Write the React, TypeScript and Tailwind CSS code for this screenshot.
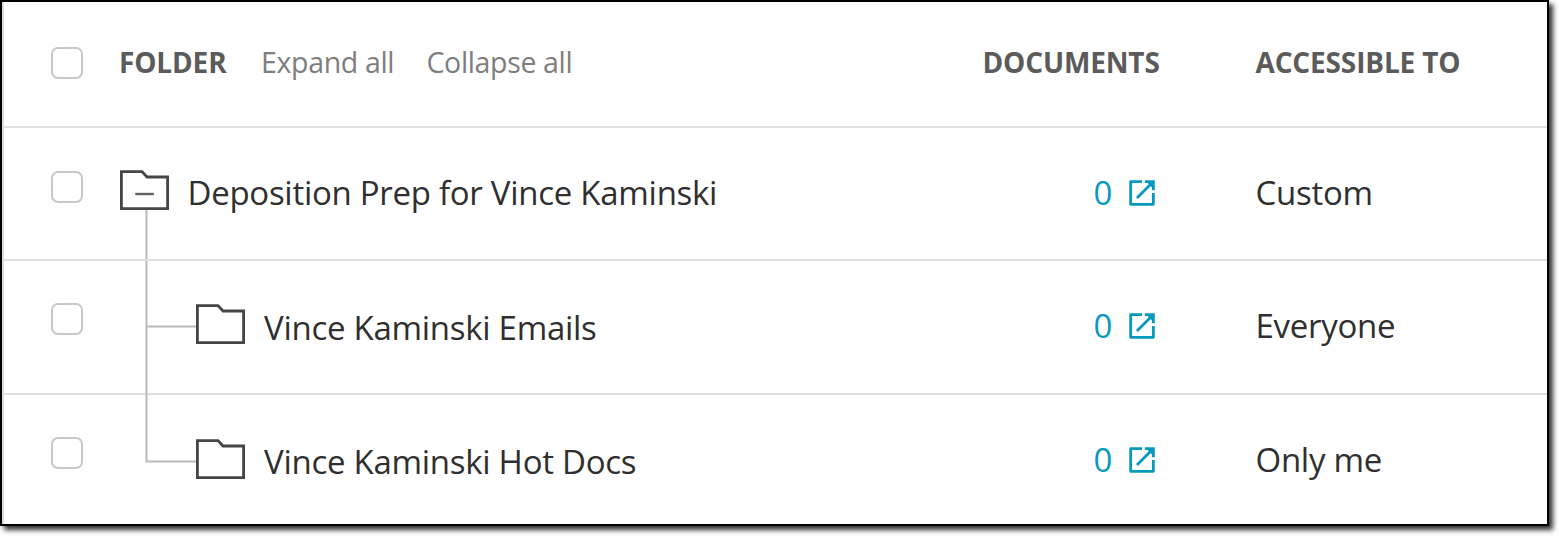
type Row = {
  name: string;
  access: string;
  child: boolean;
  rowClass: string;
  checkClass: string;
  nameClass: string;
  iconClass: string;
  cellClass: string;
};

const rows: Row[] = [
  {
    name: "Deposition Prep for Vince Kaminski",
    access: "Custom",
    child: false,
    rowClass: "h-[133px] border-b-2 border-[#dfe0e1]",
    checkClass: "pt-[42.500px]",
    nameClass: "pt-[45px]",
    iconClass: "mt-[-3px]",
    cellClass: "pt-[45px]",
  },
  {
    name: "Vince Kaminski Emails",
    access: "Everyone",
    child: true,
    rowClass: "h-[134px] border-b-2 border-[#dfdfdf]",
    checkClass: "pt-[41.500px]",
    nameClass: "pt-[47px]",
    iconClass: "mt-[-4.500px]",
    cellClass: "pt-[45px]",
  },
  {
    name: "Vince Kaminski Hot Docs",
    access: "Only me",
    child: true,
    rowClass: "h-[129px]",
    checkClass: "pt-[42px]",
    nameClass: "pt-[47px]",
    iconClass: "mt-[-3.500px]",
    cellClass: "pt-[45px]",
  },
];

function Checkbox() {
  return (
    <button
      role="checkbox"
      aria-checked="false"
      className="block h-8 w-8 rounded-[7px] border-2 border-[#c8c8c8] bg-white"
    />
  );
}

function FolderIcon({ open }: { open: boolean }) {
  return (
    <svg width="49" height="41" viewBox="0 0 49 41" fill="none">
      <path
        d="M1.4 1.6H22L27 7H47.6V38.7H1.4Z"
        fill="#fff"
        stroke="#454545"
        strokeWidth="2.8"
      />
      {open && <path d="M15.3 24H33.8" stroke="#606060" strokeWidth="2.4" />}
    </svg>
  );
}

function OpenIcon() {
  return (
    <svg width="34" height="34" viewBox="0 0 24 24" fill="#0899bf">
      <path d="M19 19H5V5h7V3H4A1 1 0 0 0 3 4V20A1 1 0 0 0 4 21H20A1 1 0 0 0 21 20V12h-2v7zM14 3v2h3.590l-9.830 9.830 1.410 1.410L19 6.410V10h2V3h-7z" />
      <path d="M14.500 3.500H20.500V9.500Z" />
    </svg>
  );
}

export default function App() {
  return (
    <div className="h-[536px] w-[1559px] overflow-hidden bg-white font-['Open_Sans','Noto_Sans',sans-serif] text-[#2f2f2f]">
      <div className="relative h-[526px] w-[1549px] border-2 border-black bg-white shadow-[4px_4px_5px_rgba(0,0,0,0.8)]">
        <div className="h-full border-l-2 border-[#dcdcdc]">
          <div className="grid h-[126px] grid-cols-[115px_863.5px_273px_1fr] border-b-2 border-[#dfe0e1] text-[28px] leading-10 tracking-[-0.15px] whitespace-nowrap">
            <div className="pt-[45px] pl-[47px]">
              <Checkbox />
            </div>
            <div className="flex pt-[39.500px] text-[#7e7e7e]">
              <span className="w-[142px] font-bold text-[#5b5b5b]">FOLDER</span>
              <span className="w-[165.500px] text-[28.500px] tracking-[-0.35px]">Expand all</span>
              <span className="text-[28.500px] tracking-[-0.35px]">Collapse all</span>
            </div>
            <div className="pt-[39.500px] font-bold text-[#5b5b5b]">DOCUMENTS</div>
            <div className="pt-[39.500px] font-bold text-[#5b5b5b]">ACCESSIBLE TO</div>
          </div>
          {rows.map((r) => (
            <div
              key={r.name}
              className={`grid grid-cols-[114px_863.5px_274px_1fr] text-[33px] leading-10 tracking-[-0.28px] whitespace-nowrap ${r.rowClass}`}
            >
              <div className={`pl-[47px] ${r.checkClass}`}>
                <Checkbox />
              </div>
              <div
                className={`flex items-start ${r.child ? "gap-[19px] pl-[78px]" : "gap-[18.500px] pl-[2px]"} ${r.nameClass}`}
              >
                <div className={r.iconClass}>
                  <FolderIcon open={!r.child} />
                </div>
                <span>{r.name}</span>
              </div>
              <div className={`flex items-start gap-[12.500px] pl-[112px] text-[#0899bf] ${r.cellClass}`}>
                <span>0</span>
                <div className="mt-[3px]">
                  <OpenIcon />
                </div>
              </div>
              <div className={r.cellClass}>{r.access}</div>
            </div>
          ))}
        </div>
        {/* Tree connectors drawn over the rows */}
        <svg className="absolute top-0 left-0" width="200" height="522" fill="none" stroke="#bababa" strokeWidth="2">
          <path d="M144.500 208V257M144.500 259V459.500H194M144.500 324.500H194" />
        </svg>
      </div>
    </div>
  );
}
